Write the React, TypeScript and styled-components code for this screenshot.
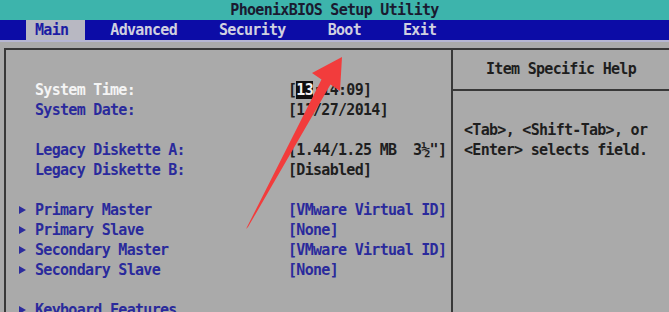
import React from 'react';
import styled, { createGlobalStyle } from 'styled-components';

const GlobalStyle = createGlobalStyle`
  html, body {
    margin: 0;
    padding: 0;
    background: #aaaaaa;
  }
`;

const Screen = styled.div`
  position: relative;
  width: 669px;
  height: 312px;
  overflow: hidden;
  background: #aaaaaa;
  font-family: 'DejaVu Sans Mono', 'Liberation Mono', monospace;
  font-weight: bold;
  font-size: 15px;
  letter-spacing: -0.7px;
  line-height: 20px;
  white-space: pre;
`;

const TitleBar = styled.div`
  height: 20px;
  background: #3db4ac;
  color: #1a1a30;
  text-align: center;
`;

const MenuBar = styled.nav`
  display: flex;
  gap: 16px;
  height: 20px;
  padding-left: 26px;
  background: #0c0ca6;
  border-bottom: 2px solid #b6b6d2;
`;

const MenuItem = styled.span<{ $active?: boolean }>`
  padding: 0 17px 0 9px;
  color: ${(p) => (p.$active ? '#1c1ca4' : '#d0d0e0')};
  background: ${(p) => (p.$active ? '#b8b8c2' : 'transparent')};
`;

const Frame = styled.div`
  display: grid;
  grid-template-columns: 447px 1fr;
  height: 290px;
  margin: 6px 0 0 4px;
  border: 2px solid #383838;
  border-right: none;
  border-bottom: none;
`;

const SetupPanel = styled.section`
  padding-top: 30px;
  border-right: 2px solid #383838;
`;

const Row = styled.div`
  display: flex;
  height: 20px;
  padding-left: 12px;
`;

const Marker = styled.span<{ $show?: boolean }>`
  width: 17px;
  display: flex;
  align-items: center;

  &::before {
    content: '';
    display: ${(p) => (p.$show ? 'block' : 'none')};
    margin-left: 1px;
    border-left: 7px solid #2c2c9c;
    border-top: 4px solid transparent;
    border-bottom: 4px solid transparent;
  }
`;

const Label = styled.span<{ $selected?: boolean }>`
  width: 253px;
  color: ${(p) => (p.$selected ? '#f4f4f4' : '#2a2a9c')};
`;

const Value = styled.span<{ $blue?: boolean }>`
  color: ${(p) => (p.$blue ? '#2a2a9c' : '#1e1e1e')};
`;

const Highlight = styled.span`
  background: #101010;
  color: #f4f4f4;
`;

const HelpPanel = styled.aside`
  display: flex;
  flex-direction: column;
`;

const HelpHeader = styled.div`
  height: 39px;
  line-height: 39px;
  text-align: center;
  color: #1e1e1e;
  border-bottom: 2px solid #383838;
`;

const HelpBody = styled.div`
  padding: 29px 0 0 11px;
  color: #1e1e1e;
`;

const Annotation = styled.svg`
  position: absolute;
  left: 0;
  top: 0;
  pointer-events: none;
`;

type Item = {
  label?: string;
  value?: React.ReactNode;
  sub?: boolean;
  selected?: boolean;
  blue?: boolean;
};

const items: Item[] = [
  {
    label: 'System Time:',
    selected: true,
    value: (
      <>
        [<Highlight>13</Highlight>:14:09]
      </>
    ),
  },
  { label: 'System Date:', value: '[11/27/2014]' },
  {},
  { label: 'Legacy Diskette A:', value: '[1.44/1.25 MB  3½"]' },
  { label: 'Legacy Diskette B:', value: '[Disabled]' },
  {},
  { label: 'Primary Master', sub: true, blue: true, value: '[VMware Virtual ID]' },
  { label: 'Primary Slave', sub: true, blue: true, value: '[None]' },
  { label: 'Secondary Master', sub: true, blue: true, value: '[VMware Virtual ID]' },
  { label: 'Secondary Slave', sub: true, blue: true, value: '[None]' },
  {},
  { label: 'Keyboard Features', sub: true },
];

const menu = ['Main', 'Advanced', 'Security', 'Boot', 'Exit'];

export default function App() {
  return (
    <>
      <GlobalStyle />
      <Screen>
        <TitleBar>PhoenixBIOS Setup Utility</TitleBar>
        <MenuBar>
          {menu.map((m, i) => (
            <MenuItem key={m} $active={i === 0}>
              {m}
            </MenuItem>
          ))}
        </MenuBar>
        <Frame>
          <SetupPanel>
            {items.map((it, i) => (
              <Row key={i}>
                <Marker $show={it.sub} />
                <Label $selected={it.selected}>{it.label}</Label>
                <Value $blue={it.blue}>{it.value}</Value>
              </Row>
            ))}
          </SetupPanel>
          <HelpPanel>
            <HelpHeader>Item Specific Help</HelpHeader>
            <HelpBody>
              {'<Tab>, <Shift-Tab>, or\n<Enter> selects field.'}
            </HelpBody>
          </HelpPanel>
        </Frame>
        <Annotation width={669} height={312} viewBox="0 0 669 312">
          <polygon
            points="342,57 340,91 330.5,84.5 248,227 246,229 321.5,79.5 312,73"
            fill="#f23c3c"
          />
        </Annotation>
      </Screen>
    </>
  );
}
